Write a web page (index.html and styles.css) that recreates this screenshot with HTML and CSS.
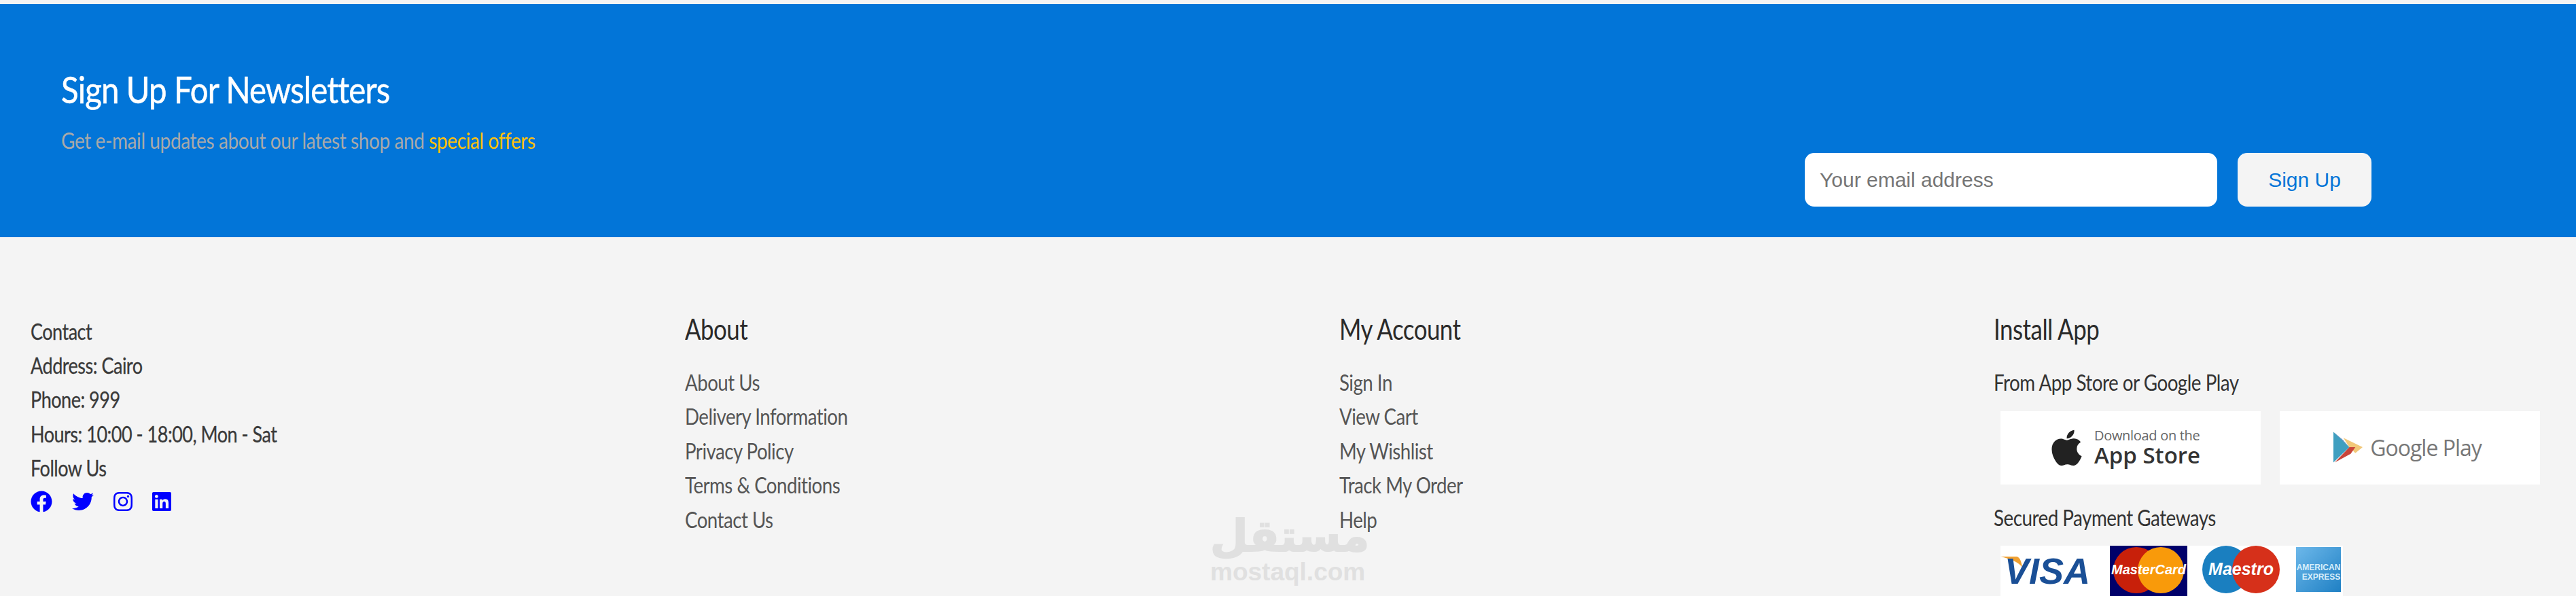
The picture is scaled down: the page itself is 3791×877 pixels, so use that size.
FILE: index.html
```html
<!DOCTYPE html>
<html lang="en">
<head>
  <meta charset="UTF-8">
  <meta name="viewport" content="width=device-width, initial-scale=1.0">
  <title>Footer</title>
  <link rel="stylesheet" href="styles.css">
</head>
<body>
  <section class="newsletter">
    <div class="news-text">
      <h2 class="news-title">Sign Up For Newsletters</h2>
      <p class="news-sub">Get e-mail updates about our latest shop and <span class="offers">special offers</span></p>
    </div>
    <form class="news-form">
      <input class="news-input" type="text" placeholder="Your email address">
      <button class="news-btn" type="button">Sign Up</button>
    </form>
  </section>

  <footer class="footer">
    <div class="watermark">
      <div class="wm-ar">مستقل</div>
      <div class="wm-en">mostaql.com</div>
    </div>

    <div class="col contact">
      <p>Contact</p>
      <p>Address: Cairo</p>
      <p>Phone: 999</p>
      <p>Hours: 10:00 - 18:00, Mon - Sat</p>
      <p>Follow Us</p>
      <div class="socials">
        <svg class="ico" viewBox="0 0 512 512"><path d="M504 256C504 119 393 8 256 8S8 119 8 256c0 123.78 90.69 226.38 209.25 245V327.69h-63V256h63v-54.64c0-62.15 37-96.48 93.67-96.48 27.14 0 55.52 4.84 55.52 4.84v61h-31.28c-30.8 0-40.41 19.12-40.41 38.73V256h68.78l-11 71.69h-57.78V501C413.31 482.38 504 379.78 504 256z"/></svg>
        <svg class="ico" viewBox="0 0 512 512"><path d="M459.37 151.716c.325 4.548.325 9.097.325 13.645 0 138.72-105.583 298.558-298.558 298.558-59.452 0-114.68-17.219-161.137-47.106 8.447.974 16.568 1.299 25.34 1.299 49.055 0 94.213-16.568 130.274-44.832-46.132-.975-84.792-31.188-98.112-72.772 6.498.974 12.995 1.624 19.818 1.624 9.421 0 18.843-1.3 27.614-3.573-48.081-9.747-84.143-51.98-84.143-102.985v-1.299c13.969 7.797 30.214 12.67 47.431 13.319-28.264-18.843-46.781-51.005-46.781-87.391 0-19.492 5.197-37.36 14.294-52.954 51.655 63.675 129.3 105.258 216.365 109.807-1.624-7.797-2.599-15.918-2.599-24.04 0-57.828 46.782-104.934 104.934-104.934 30.213 0 57.502 12.67 76.67 33.137 23.715-4.548 46.456-13.32 66.599-25.34-7.798 24.366-24.366 44.833-46.132 57.827 21.117-2.273 41.584-8.122 60.426-16.243-14.292 20.791-32.161 39.308-52.628 54.253z"/></svg>
        <svg class="ico ico-narrow" viewBox="0 0 448 512"><path d="M224.1 141c-63.6 0-114.9 51.3-114.9 114.9s51.3 114.9 114.9 114.9S339 319.5 339 255.9 287.7 141 224.1 141zm0 189.6c-41.1 0-74.7-33.5-74.7-74.7s33.5-74.7 74.7-74.7 74.7 33.5 74.7 74.7-33.6 74.7-74.7 74.7zm146.4-194.3c0 14.9-12 26.8-26.8 26.8-14.9 0-26.8-12-26.8-26.8s12-26.8 26.8-26.8 26.8 12 26.8 26.8zm76.1 27.2c-1.7-35.9-9.9-67.7-36.2-93.9-26.2-26.2-58-34.4-93.9-36.2-37-2.1-147.9-2.1-184.9 0-35.8 1.7-67.6 9.9-93.9 36.1s-34.4 58-36.2 93.9c-2.1 37-2.1 147.9 0 184.9 1.7 35.9 9.9 67.7 36.2 93.9s58 34.4 93.9 36.2c37 2.1 147.9 2.1 184.9 0 35.9-1.7 67.7-9.9 93.9-36.2 26.2-26.2 34.4-58 36.2-93.9 2.1-37 2.1-147.8 0-184.8zM398.8 388c-7.8 19.6-22.9 34.7-42.6 42.6-29.5 11.7-99.5 9-132.1 9s-102.7 2.6-132.1-9c-19.6-7.8-34.7-22.9-42.6-42.6-11.7-29.5-9-99.5-9-132.1s-2.6-102.7 9-132.1c7.8-19.6 22.9-34.7 42.6-42.6 29.5-11.7 99.5-9 132.1-9s102.7-2.6 132.1 9c19.6 7.8 34.7 22.9 42.6 42.6 11.7 29.5 9 99.5 9 132.1s2.7 102.7-9 132.1z"/></svg>
        <svg class="ico ico-narrow" viewBox="0 0 448 512"><path d="M416 32H31.9C14.3 32 0 46.5 0 64.3v383.4C0 465.5 14.3 480 31.9 480H416c17.6 0 32-14.5 32-32.3V64.3c0-17.8-14.4-32.3-32-32.3zM135.4 416H69V202.2h66.5V416zm-33.2-243c-21.3 0-38.5-17.3-38.5-38.5S80.9 96 102.2 96c21.2 0 38.5 17.3 38.5 38.5 0 21.3-17.2 38.5-38.5 38.5zm282.1 243h-66.4V312c0-24.8-.5-56.7-34.5-56.7-34.6 0-39.9 27-39.9 54.9V416h-66.4V202.2h63.7v29.2h.9c8.9-16.8 30.6-34.5 62.9-34.5 67.2 0 79.7 44.3 79.7 101.9V416z"/></svg>
      </div>
    </div>

    <div class="col">
      <h4 class="col-title">About</h4>
      <a class="link" href="#">About Us</a>
      <a class="link" href="#">Delivery Information</a>
      <a class="link" href="#">Privacy Policy</a>
      <a class="link" href="#">Terms &amp; Conditions</a>
      <a class="link" href="#">Contact Us</a>
    </div>

    <div class="col">
      <h4 class="col-title">My Account</h4>
      <a class="link" href="#">Sign In</a>
      <a class="link" href="#">View Cart</a>
      <a class="link" href="#">My Wishlist</a>
      <a class="link" href="#">Track My Order</a>
      <a class="link" href="#">Help</a>
    </div>

    <div class="col">
      <h4 class="col-title">Install App</h4>
      <p class="app-label">From App Store or Google Play</p>
      <div class="stores">
        <div class="store store-apple">
          <svg class="apple" viewBox="0 0 384 512"><path d="M318.7 268.7c-.2-36.7 16.4-64.4 50-84.8-18.8-26.9-47.2-41.7-84.7-44.6-35.5-2.8-74.3 20.7-88.5 20.7-15 0-49.4-19.7-76.4-19.7C63.3 141.2 4 184.8 4 273.5q0 39.3 14.4 81.2c12.8 36.7 59 126.7 107.2 125.2 25.2-.6 43-17.9 75.8-17.9 31.8 0 48.3 17.9 76.4 17.9 48.6-.7 90.4-82.5 102.6-119.3-65.2-30.7-61.7-90-61.7-91.9zm-56.6-164.2c27.3-32.4 24.8-61.9 24-72.5-24.1 1.4-52 16.4-67.9 34.9-17.5 19.8-27.8 44.3-25.6 71.9 26.1 2 49.9-11.4 69.5-34.3z"/></svg>
          <div class="apple-text">
            <div class="apple-small">Download on the</div>
            <div class="apple-big">App Store</div>
          </div>
        </div>
        <div class="store store-google">
          <svg class="gplay" viewBox="0 0 44 46">
            <path fill="#3f9fc0" d="M0 0 L24 23 L0 46 Z"/>
            <path fill="#2e6fb0" d="M0 0 L24 23 L14 12 Z"/>
            <path fill="#f2c879" d="M15 9 L44 23 L33 32 L24 23 Z"/>
            <path fill="#c9453a" d="M33 23 L26 33 L2 46 L24 23 Z"/>
          </svg>
          <span class="gplay-text">Google Play</span>
        </div>
      </div>
      <p class="pay-label">Secured Payment Gateways</p>
      <svg class="cards" viewBox="0 0 504 76">
        <defs>
          <linearGradient id="amex-fill" x1="0" y1="0" x2="1" y2="1">
            <stop offset="0" stop-color="#6db8ea"/>
            <stop offset="1" stop-color="#1f80c4"/>
          </linearGradient>
        </defs>
        <rect width="504" height="76" fill="#fff"/>
        <path fill="#f0a030" d="M0 16 L24 16 Q30 17 32 32 Q26 22 0 16 Z"/>
        <text class="card-visa" x="6" y="56">VISA</text>
        <rect x="161" y="0" width="114" height="76" fill="#00006a"/>
        <circle cx="200" cy="36" r="34" fill="#c8200a"/>
        <circle cx="236" cy="36" r="34" fill="#f99a0a"/>
        <text class="card-mc" x="218" y="42">MasterCard</text>
        <circle cx="332" cy="35" r="35" fill="#1a7fc0"/>
        <circle cx="376" cy="35" r="35" fill="#d6301a"/>
        <text class="card-mc card-maestro" x="354" y="43">Maestro</text>
        <rect x="435" y="2" width="66" height="66" fill="url(#amex-fill)"/>
        <text class="card-amex" x="468" y="36">AMERICAN</text>
        <text class="card-amex" x="472" y="50">EXPRESS</text>
      </svg>
    </div>
  </footer>
</body>
</html>
```

FILE: styles.css
```css
html, body {
  height: 877px;
  margin: 0;
  overflow: hidden;
  background: #f4f4f4;
  font-family: Lato, "Liberation Sans", sans-serif;
}

p, h2, h4 {
  margin: 0;
  font-weight: normal;
}

/* no condensed face installed, so the lato text is squeezed to width */
.news-title,
.news-sub,
.contact p,
.col-title,
.link,
.app-label,
.pay-label {
  transform-origin: left center;
}

.newsletter {
  display: flex;
  justify-content: space-between;
  align-items: flex-end;
  height: 343px;
  box-sizing: border-box;
  margin-top: 6px;
  padding: 0 301px 45px 90px;
  background: #0275d8;
}

.news-text {
  align-self: flex-start;
  padding-top: 91px;
}

.news-title {
  width: max-content;
  font-size: 54px;
  line-height: 70px;
  letter-spacing: -1px;
  color: #fff;
  -webkit-text-stroke: .5px #fff;
  transform: scaleX(.878);
}

.news-sub {
  width: max-content;
  margin-top: 18px;
  font-size: 33px;
  line-height: 42px;
  letter-spacing: -.5px;
  color: #a9a9a9;
  transform: scaleX(.85);
}

.offers {
  color: #ffc107;
}

.news-form {
  display: flex;
  gap: 30px;
}

.news-input {
  width: 607px;
  height: 79px;
  box-sizing: border-box;
  padding: 0 22px;
  border: 0;
  border-radius: 14px;
  background: #fff;
  font-family: "Liberation Sans", sans-serif;
  font-size: 30px;
}

.news-input::placeholder {
  color: #757575;
}

.news-btn {
  width: 197px;
  height: 79px;
  border: 0;
  border-radius: 14px;
  background: #f4f4f4;
  color: #0275d8;
  font-family: "Liberation Sans", sans-serif;
  font-size: 30px;
}

.footer {
  position: relative;
  display: grid;
  grid-template-columns: repeat(4, 963px);
  padding: 110px 0 0 45px;
}

.col {
  position: relative;
  display: flex;
  flex-direction: column;
  align-items: flex-start;
}

.contact {
  padding-top: 4px;
  font-size: 32px;
  line-height: 50.2px;
  letter-spacing: -.6px;
  color: #3a3a3a;
}

.contact p {
  transform: scaleX(.845);
  -webkit-text-stroke: .3px #3a3a3a;
}

.socials {
  display: flex;
  align-items: center;
  gap: 29px;
  margin-top: 8px;
}

.ico {
  width: 32px;
  height: 32px;
  fill: #0000ff;
}

.ico-narrow {
  width: 28px;
}

.col-title {
  margin-bottom: 29px;
  font-size: 42px;
  line-height: 50px;
  letter-spacing: -.6px;
  color: #2a2a2a;
  transform: scaleX(.83);
}

.link {
  font-size: 32px;
  line-height: 50.4px;
  letter-spacing: -.6px;
  color: #555;
  text-decoration: none;
  transform: scaleX(.865);
}

.app-label,
.pay-label {
  font-size: 32px;
  line-height: 50px;
  letter-spacing: -.6px;
  color: #333;
  transform: scaleX(.87);
}

.stores {
  display: flex;
  gap: 28px;
  margin: 17px 0 24px 10px;
}

.store {
  display: flex;
  align-items: center;
  justify-content: center;
  box-sizing: border-box;
  width: 383px;
  height: 108px;
  background: #fff;
}

.store-apple {
  gap: 18px;
  padding-right: 14px;
}

.apple {
  width: 45px;
  height: 60px;
  fill: #222;
}

.apple-small {
  font-family: "Open Sans", sans-serif;
  font-size: 20px;
  line-height: 22px;
  letter-spacing: -.3px;
  color: #666;
}

.apple-big {
  font-family: "Open Sans", sans-serif;
  font-size: 33px;
  font-weight: 600;
  line-height: 36px;
  color: #333;
}

.store-google {
  gap: 11px;
  padding: 0 7px 2px 0;
}

.gplay {
  width: 43px;
  height: 46px;
}

.gplay-text {
  font-family: "Open Sans", sans-serif;
  font-size: 32px;
  letter-spacing: -1px;
  color: #777;
}

.cards {
  width: 504px;
  height: 76px;
  margin: 16px 0 0 10px;
}

.card-visa {
  font-family: "Liberation Sans", sans-serif;
  font-size: 54px;
  font-weight: bold;
  font-style: italic;
  fill: #1a4f96;
}

.card-mc {
  font-family: "Liberation Sans", sans-serif;
  font-size: 20px;
  font-weight: bold;
  font-style: italic;
  text-anchor: middle;
  fill: #fff;
}

.card-maestro {
  font-size: 25px;
}

.card-amex {
  font-family: "Liberation Sans", sans-serif;
  font-size: 12px;
  font-weight: bold;
  text-anchor: middle;
  fill: #d8eefa;
}

.watermark {
  position: absolute;
  left: 1781px;
  top: 404px;
  width: 227px;
  color: #e0e0e0;
  text-align: center;
}

.wm-ar {
  font-family: "DejaVu Sans", sans-serif;
  font-size: 64px;
  font-weight: bold;
  line-height: 72px;
  -webkit-text-stroke: 2px #e0e0e0;
}

.wm-en {
  font-family: "Liberation Sans", sans-serif;
  font-size: 37px;
  font-weight: bold;
  line-height: 34px;
}
```
